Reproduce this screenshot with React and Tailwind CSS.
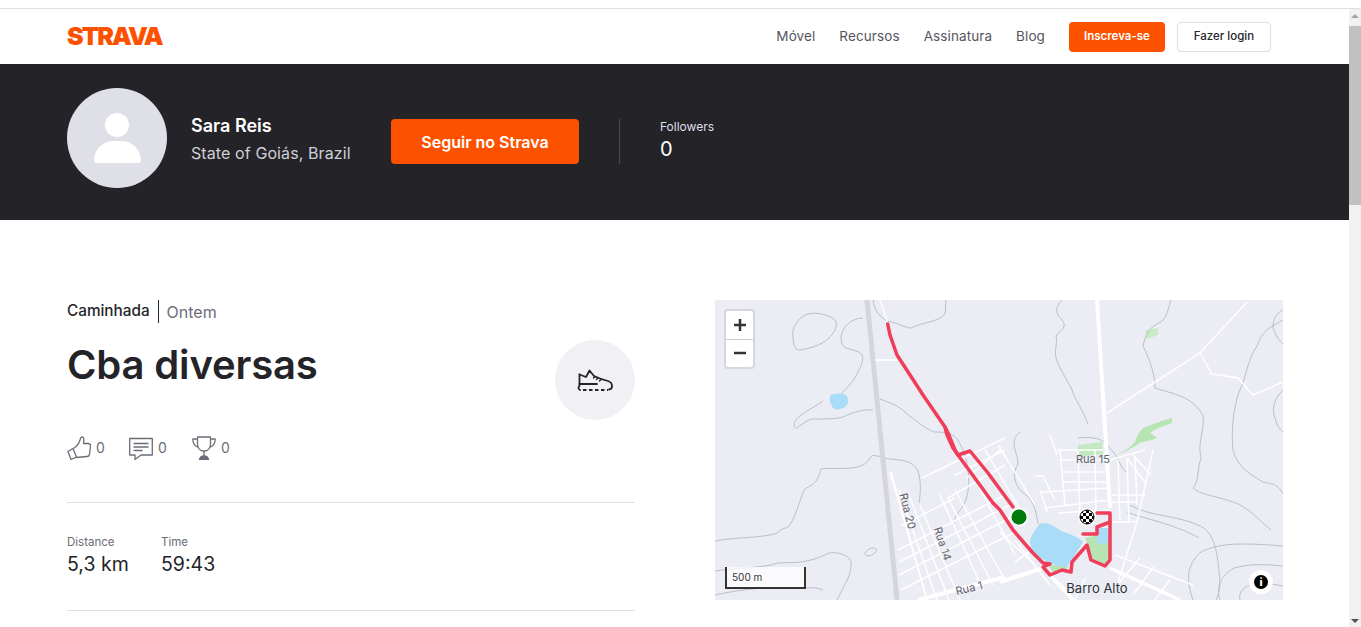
import React from 'react'

const NAV = ['Móvel', 'Recursos', 'Assinatura', 'Blog']

// streets of the small towns on the map, in map coordinates
const TOWN_A_NE = [
  [183, 250, 290, 195], [184, 275, 295, 218], [186, 290, 300, 232], [207, 178, 290, 138],
  [233, 198, 290, 165], [186, 226, 240, 198], [184, 262, 295, 205], [240, 175, 290, 150],
  [252, 178, 285, 150],
]
const TOWN_A_SE = [
  [175, 172, 212, 300], [184, 190, 222, 300], [194, 195, 234, 300], [205, 205, 245, 300],
  [224, 193, 268, 290], [233, 198, 278, 285], [240, 190, 290, 280], [255, 170, 300, 255],
  [270, 150, 308, 215], [283, 145, 320, 205],
]
const TOWN_B = [
  [342, 150, 388, 150], [345, 160, 395, 160], [347, 172, 395, 172], [347, 182, 395, 182], [327, 192, 395, 188],
  [330, 208, 395, 200], [343, 213, 395, 210], [397, 195, 430, 195], [397, 202, 422, 202], [395, 222, 422, 222],
  [345, 150, 350, 205], [363, 150, 365, 215], [380, 150, 381, 215], [395, 160, 430, 150], [403, 160, 405, 222],
  [412, 158, 414, 222], [420, 156, 422, 205], [335, 135, 342, 155], [412, 158, 432, 185], [418, 155, 436, 175],
  [325, 190, 332, 212], [320, 176, 328, 176], [328, 176, 340, 200],
]
const TOWN_S = [
  [400, 255, 478, 285], [402, 285, 425, 258], [418, 295, 440, 265], [440, 300, 455, 280],
  [345, 283, 360, 300], [370, 278, 360, 300], [300, 240, 335, 285], [285, 232, 320, 265], [300, 262, 330, 240],
]

const CONTOURS = [
  'M78 36c-2-8 6-18 12-21 10-4 22-1 30 5 4 6-2 14-6 18-8 8-22 11-30 12-5 0-6-8-6-14z',
  'M148 18c-12 0-22 10-22 20 0 12 8 10 18 14 8 4 1 16-2 22-4 8-10 14-16 20',
  'M108 101c-8 6-22 12-28 20-2 4 0 9 2 7 8-6 12-10 22-9 10 0 22 0 28-4 10-4 20-6 26-5',
  'M165 99c10 4 18 6 26 14 8 6 18 15 28 19 8 0 18 0 24 8 4 8 8 14 10 30 2 16 0 28-6 38-6 6-8 12-9 18',
  'M0 241c20-4 50-3 62-8 8-8 10-2 14-10 6-10 10-28 14-34 10-6 12-6 16-20 12-2 28 2 42-4 8-4 6-12 14-9 8 1 6 2 12 3 14 1 22 2 28 10 4 8 4 22 2 34',
  'M0 271c30-4 50-3 62-8 14-1 28 2 52-10 14-2 24 6 22 12 0 12-8 22-14 35',
  'M0 295c18-4 44-8 64-7 18 2 34-3 44 2',
  'M150 253c4-6 10-6 12-3-2 5-12 9-12 3z',
  'M158 0c1 10 6 16 14 21 12 2 18 7 24 7 12-6 28-6 34-14 1-6 0-8 1-14',
  'M347 0c-8 8-6 14 0 20 6 8-2 10-6 16 2 8-2 12 0 22 4 12 8 16 16 32 4 12 8 14 16 34',
  'M456 0c-4 12-4 20-14 24-10 5-12 14-14 22 8 16 12 30 12 42 18 6 38 8 48 28 2 14-6 26-2 42-4 12-2 24-8 30 6 6 22 8 40 14 14 4 26 18 38 28',
  'M363 138c14-2 26 1 30 8 12 12 10 18 18 26',
  'M415 205c20 12 50 10 72 22 14 8 16 30 18 56 0 6-2 12-4 17',
  'M568 20c-14 8-20 10-26 26-10 14-10 30-18 46-6 18-8 40-6 58 4 18 20 26 30 32 6 2 14 0 20 12',
  'M568 10c-8 4-10 10-10 18 4 10 6 12 10 16',
  'M568 90c-8 8-12 18-8 28 2 8 4 10 8 14',
  'M478 300c-6-18-8-34 8-48 16-8 34-10 82-6',
  'M505 300c-4-12 0-24 14-32 14-4 30-4 49-2',
  'M525 300c-2-8 4-14 14-16 10-1 20 0 29 2',
  'M412 212c14 6 48 12 72 26',
  'M305 132c-12 10-2 20-2 32-6 10-4 20 4 28 10 6 14 16 16 32',
]

// finish flag squares, clipped to the marker circle
const CHECKS = []
for (let row = 0; row < 5; row++) {
  for (let col = 0; col < 5; col++) {
    if ((row + col) % 2 === 0) CHECKS.push([365 + col * 3, 210 + row * 3])
  }
}

function MapDrawing() {
  return (
    <svg viewBox="0 0 568 300" className="h-full w-full" style={{ fontFamily: 'Inter, sans-serif' }}>
      <defs>
        <clipPath id="finish">
          <circle cx="372" cy="217" r="7" />
        </clipPath>
      </defs>
      <rect width="568" height="300" fill="#ebecf4" />

      {/* parks */}
      <path d="M363 145l24-3 1 12-25 3z" fill="#c4e8c2" />
      <path d="M396 157c10-4 18-8 24-15 2-6 4-10 8-14 8-3 20-8 29-10v5c-8 3-16 5-22 10 3 2 5 3 7 5-6 3-11 3-17 5-8 5-16 10-27 13z" fill="#b6e5b2" />
      <path d="M430 30l13-2 0 7-11 4z" fill="#c8ebc4" />
      <path d="M370 238l13-3h12l0 28-5 3-14-7-2-12z" fill="#b6e5b2" />
      <path d="M315 240l10-17 8 2-10 25z" fill="#b6e5b2" />
      <path d="M332 264l22 3-14 8z" fill="#b6e5b2" />

      {CONTOURS.map((d) => (
        <path key={d} d={d} fill="none" stroke="#bcbfc9" strokeWidth="1" />
      ))}

      {/* main roads */}
      <path d="M152 0l30 300" stroke="#d5d6dc" strokeWidth="5" />
      <path d="M165 0l8 24M160 60h22M176 172l36 128" stroke="#fff" strokeWidth="1.500" fill="none" />
      <path d="M382 0l13 208" stroke="#fff" strokeWidth="4" />
      <path d="M392 113l93-60 47-51" stroke="#fff" strokeWidth="1.500" fill="none" />
      <path d="M485 53l12 21 26 4 15 17 30-13" stroke="#fff" strokeWidth="1.500" fill="none" />
      <path d="M438 150l-16 72-20 63" stroke="#fff" strokeWidth="1.500" fill="none" />
      <path d="M203 300l87-23M285 282l43-14" stroke="#fff" strokeWidth="4" fill="none" />
      <path d="M395 268l70 32M335 275l23 25" stroke="#fff" strokeWidth="3.500" fill="none" />

      {[...TOWN_A_NE, ...TOWN_A_SE, ...TOWN_B, ...TOWN_S].map(([x1, y1, x2, y2]) => (
        <line key={`${x1}-${y1}-${x2}-${y2}`} x1={x1} y1={y1} x2={x2} y2={y2} stroke="#fff" strokeWidth="1.500" />
      ))}

      {/* water */}
      <path d="M116 95c5-2 12-1 15 0 3 4 3 9-1 12-4 3-9 3-12 1-2-4-5-9-2-13z" fill="#a9dcf7" />
      <path d="M315 240C318 232 323 226 327 223C333 223 337 225 340 227C345 230 348 232 352 233C358 235 364 238 368 242C363 250 357 260 352 267C346 267 340 265 335 263C329 260 322 256 317 252C316 248 315 244 315 240z" fill="#a9dcf7" />
      <path d="M384 228h9v14l-3 2h-7l-2-6z" fill="#a9dcf7" />

      {/* activity track */}
      <g fill="none" stroke="#ef3d5a" strokeWidth="3.500" strokeLinejoin="round" strokeLinecap="round">
        <path d="M172.700 24L175 35L182 55L197 78L208 95L230 127L232 135L238 148L243 155L278 203L285 210L298 230L317 252L328 263L335 264L328 267L335 275L347 270L356 272L357 262L372 245L376 260L390 266L395 260V213H382" />
        <path d="M230 127L233 133L240 150L243 155L255 151L273 173L298 207" />
        <path d="M368 234H382V227L395 222" />
      </g>

      {/* start and finish */}
      <circle cx="304" cy="217" r="10" fill="#fff" fillOpacity="0.7" />
      <circle cx="304" cy="217" r="7.500" fill="#007a0a" />
      <circle cx="372" cy="217" r="9" fill="#fff" />
      <g clipPath="url(#finish)">
        {CHECKS.map(([x, y]) => (
          <rect key={`${x}-${y}`} x={x} y={y} width="3" height="3" fill="#000" />
        ))}
      </g>
      <circle cx="372" cy="217" r="7" fill="none" stroke="#000" strokeWidth="1" />

      {/* labels */}
      <g fill="#5f6066" fontSize="11">
        <text x="189" y="212" textAnchor="middle" transform="rotate(76 189 212)">Rua 20</text>
        <text x="224" y="245" textAnchor="middle" transform="rotate(72 224 245)">Rua 14</text>
        <text x="255" y="292" textAnchor="middle" transform="rotate(-14 255 292)">Rua 1</text>
        <text x="378" y="163" textAnchor="middle">Rua 15</text>
      </g>
      <text x="382" y="293" textAnchor="middle" fontSize="13" fill="#2f3034">Barro Alto</text>
    </svg>
  )
}

function ShoeIcon() {
  return (
    <svg width="36" height="24" viewBox="0 0 36 24" fill="none" stroke="#242428" strokeWidth="1.800" strokeLinecap="round" strokeLinejoin="round">
      <path d="M2.500 6.500L9 9L12.500 2.500L17 8C21 10 27 12 31 13C33.500 13.800 35 15.500 35 18C35 20 34 21.500 32 21.500" />
      <path d="M2.500 6.500V18C1 19 1 21 3 22" />
      <path d="M2.500 16H20" />
      <path d="M18 8.500l-1.500 1.500M21 10l-1.500 1.500M24 11.500l-1.500 1.500" strokeWidth="1.400" />
      <path d="M6 22H31" strokeDasharray="3.500 2.500" strokeLinecap="butt" />
    </svg>
  )
}

function ThumbIcon() {
  return (
    <svg width="24" height="24" viewBox="0 0 24 24" fill="none" stroke="#6d6d78" strokeWidth="1.300" strokeLinejoin="round">
      <path d="M1 15.500l5-3 3.500 8.500-5.500 2.500z" />
      <path d="M6.500 12.500c3-2 5.500-5 6.500-8.500 .3-1.500 1-3 2-3 1.800 0 2.300 2.500 1.500 6.500h4.500c2 0 2.800 1.200 2.500 3l-1 8c-.3 1.300-1 2-2.500 2l-11 1" />
    </svg>
  )
}

function CommentIcon() {
  return (
    <svg width="24" height="24" viewBox="0 0 24 24" fill="none" stroke="#6d6d78" strokeWidth="1.300" strokeLinejoin="round">
      <path d="M.7 2.500h22.600v16.500H12l-6 4.500V19H.7z" />
      <path d="M4.500 7.500h15M4.500 11h15M4.500 14.500h9" />
    </svg>
  )
}

function TrophyIcon() {
  return (
    <svg width="24" height="24" viewBox="0 0 24 24" fill="none" stroke="#6d6d78" strokeWidth="1.300" strokeLinejoin="round">
      <path d="M5.500 1h13v7c0 4-2.500 7-6.500 7s-6.500-3-6.500-7z" />
      <path d="M5.500 3H.8c0 4 1.200 7 6 8.500M18.500 3h4.700c0 4-1.200 7-6 8.500" />
      <path d="M12 15v5" />
      <path d="M7.500 23.300c.5-2 2.500-3.300 4.500-3.300s4 1.300 4.500 3.300z" fill="#6d6d78" />
    </svg>
  )
}

function Social({ icon, width }) {
  return (
    <div className={`flex items-center gap-[5px] ${width}`}>
      {icon}
      <span className="text-[14px] text-[#6d6d78]">0</span>
    </div>
  )
}

function Stat({ label, value, width }) {
  return (
    <div className={width}>
      <div className="text-[11.500px] leading-[16px] text-[#6d6d78]">{label}</div>
      <div className="text-[19.500px] leading-[28px] text-[#242428]">{value}</div>
    </div>
  )
}

export default function App() {
  return (
    <div className="flex h-screen flex-col overflow-hidden bg-white font-['Inter',sans-serif] text-[#242428]">
      <div className="h-[9px] shrink-0 border-b border-[#dfdfe2]" />
      <div className="flex min-h-0 flex-1">
        <div className="min-w-0 flex-1 overflow-hidden">
          <header className="flex h-[55px] items-center pr-[78px] pl-[67px]">
            <span className="text-[25px] leading-none font-black tracking-[-1.800px] text-[#fc5200]">STRAVA</span>
            <nav className="ml-auto flex items-center gap-6 text-[13.500px] tracking-[0.1px] text-[#55555e]">
              {NAV.map((item) => (
                <a key={item}>{item}</a>
              ))}
            </nav>
            <button className="ml-6 h-[30px] w-[96px] rounded-[4px] bg-[#fc5200] text-[11.500px] font-semibold text-white">
              Inscreva-se
            </button>
            <button className="ml-3 h-[30px] w-[94px] rounded-[4px] border border-[#dfdfe8] text-[11.500px] font-medium text-[#242428]">
              Fazer login
            </button>
          </header>

          <section className="flex h-[156px] items-start bg-[#242428] pt-6 pl-[67px]">
            <div className="flex h-[100px] w-[100px] shrink-0 flex-col items-center justify-center rounded-full bg-[#dfdfe8]">
              <div className="h-[24px] w-[24px] rounded-full bg-white" />
              <div className="mt-[4px] h-[22px] w-[47px] rounded-t-[24px] rounded-b-[3px] bg-white" />
            </div>
            <div className="mt-[26px] ml-6 w-[200px]">
              <div className="text-[18px] leading-[24px] font-semibold text-white">Sara Reis</div>
              <div className="mt-[3px] text-[16px] leading-[24px] tracking-[0.1px] text-[#cfcfd8]">State of Goiás, Brazil</div>
            </div>
            <button className="mt-[31px] h-[45px] w-[188px] rounded-[4px] bg-[#fc5200] text-[16px] font-semibold text-white">
              Seguir no Strava
            </button>
            <div className="mx-10 mt-[31px] h-[45px] w-px bg-[#494950]" />
            <div className="mt-[31px] text-white">
              <div className="text-[12px] leading-[16px] text-[#dfdfe8]">Followers</div>
              <div className="text-[20px] leading-[28px]">0</div>
            </div>
          </section>

          <section className="flex gap-20 pt-20 pl-[67px]">
            <div className="w-[568px] shrink-0">
              <div className="flex h-[23px] items-center">
                <span className="text-[15.300px] font-medium text-[#242428]">Caminhada</span>
                <span className="mx-2 h-[23px] w-px bg-[#242428]" />
                <span className="text-[16px] text-[#6d6d78]">Ontem</span>
              </div>
              <div className="mt-[17px] flex items-start justify-between">
                <h1 className="text-[40px] leading-[50px] font-semibold tracking-[-0.150px] text-[#242428]">Cba diversas</h1>
                <div className="flex h-[80px] w-[80px] items-center justify-center rounded-full bg-[#f0f0f5]">
                  <ShoeIcon />
                </div>
              </div>
              <div className="mt-[15px] flex h-[25px] items-center">
                <Social icon={<ThumbIcon />} width="w-[62px]" />
                <Social icon={<CommentIcon />} width="w-[63px]" />
                <Social icon={<TrophyIcon />} width="w-[62px]" />
              </div>
              <div className="mt-[42px] h-px bg-[#dfdfe2]" />
              <div className="flex pt-[31px]">
                <Stat label="Distance" value="5,3 km" width="w-[94px]" />
                <Stat label="Time" value="59:43" width="w-[94px]" />
              </div>
              <div className="mt-[32px] h-px bg-[#dfdfe2]" />
            </div>

            <div className="relative h-[300px] w-[568px] shrink-0">
              <MapDrawing />
              <div className="absolute top-[9px] left-[9px] flex h-[60px] w-[31px] flex-col rounded-[4px] border-2 border-[#d5d6de] bg-white text-[#222]">
                <div className="flex flex-1 items-center justify-center border-b border-[#ccc]">
                  <svg width="12" height="12" viewBox="0 0 12 12"><path d="M6 0v12M0 6h12" stroke="#333" strokeWidth="2.500" /></svg>
                </div>
                <div className="flex flex-1 items-center justify-center">
                  <svg width="12" height="12" viewBox="0 0 12 12"><path d="M0 6h12" stroke="#333" strokeWidth="2.500" /></svg>
                </div>
              </div>
              <div className="absolute bottom-[11px] left-[10px] flex h-[22px] w-[81px] items-center border-x-2 border-b-2 border-[#333] bg-white/75 pl-[5px] text-[10px] text-[#333]">
                500 m
              </div>
              <div className="absolute right-[10px] bottom-[6px] flex h-[24px] w-[24px] items-center justify-center rounded-full bg-white">
                <div className="flex h-[14px] w-[14px] items-center justify-center rounded-full bg-black text-[11px] leading-none font-extrabold text-white">
                  i
                </div>
              </div>
            </div>
          </section>
        </div>

        <aside className="flex w-3 shrink-0 flex-col items-center bg-[#f1f1f1]">
          <div className="mt-[5px] h-0 w-0 border-x-[4px] border-b-[4px] border-x-transparent border-b-[#a3a3a3]" />
          <div className="mt-[8px] h-[179px] w-full bg-[#c1c1c1]" />
          <div className="mt-auto mb-[4px] h-0 w-0 border-x-[4px] border-t-[4px] border-x-transparent border-t-[#505050]" />
        </aside>
      </div>
    </div>
  )
}
